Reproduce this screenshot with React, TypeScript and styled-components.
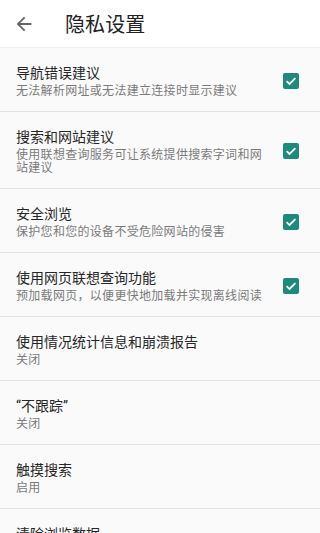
import React from "react";
import styled, { createGlobalStyle } from "styled-components";

const Global = createGlobalStyle`
  html, body { margin: 0; padding: 0; background: #fafafa; }
  body { font-family: Roboto, "Noto Sans CJK SC", sans-serif; overflow: hidden; }
  * { box-sizing: border-box; }
`;

const Page = styled.div`
  width: 320px;
  height: 533px;
  overflow: hidden;
  background: #fafafa;
  display: flex;
  flex-direction: column;
`;

const Header = styled.header`
  height: 48px;
  flex: none;
  background: #ffffff;
  border-bottom: 1px solid #f0f0f0;
  display: flex;
  align-items: center;
  padding-left: 13px;
`;

const BackButton = styled.div`
  width: 22px;
  height: 22px;
  display: flex;
  color: #666666;
  margin-right: 30px;
  margin-top: 1px;
`;

const Title = styled.h1`
  margin: 0;
  font-size: 20px;
  font-weight: 400;
  color: #222222;
  letter-spacing: 0.1px;
`;

const List = styled.div`
  display: flex;
  flex-direction: column;
`;

const Row = styled.div`
  display: flex;
  align-items: center;
  gap: 14px;
  padding: 15px 21px 13px 16px;
  border-bottom: 1px solid #e2e2e2;
  flex: none;
`;

const Texts = styled.div`
  flex: 1;
  min-width: 0;
  display: flex;
  flex-direction: column;
`;

const ItemTitle = styled.div`
  font-size: 14px;
  line-height: 20px;
  color: #262626;
`;

const ItemSub = styled.div`
  margin-top: 2px;
  font-size: 12px;
  line-height: 13px;
  letter-spacing: 0.3px;
  color: #7a7a7a;
`;

const Check = styled.div`
  width: 16px;
  height: 16px;
  flex: none;
  border-radius: 2px;
  background: #1e8a7c;
  display: flex;
  align-items: center;
  justify-content: center;
`;

const ArrowBack = () => (
  <svg viewBox="0 0 24 24" width="22" height="22" fill="currentColor">
    <path d="M20 11H7.83l5.59-5.59L12 4l-8 8 8 8 1.41-1.41L7.83 13H20v-2z" />
  </svg>
);

const CheckMark = () => (
  <svg viewBox="0 0 16 16" width="16" height="16">
    <path d="M3.6 8.2l2.9 2.8 5.9-5.9" fill="none" stroke="#ffffff" strokeWidth="1.8" />
  </svg>
);

type Item = { title: string; sub: string; checked?: boolean };

const items: Item[] = [
  { title: "导航错误建议", sub: "无法解析网址或无法建立连接时显示建议", checked: true },
  { title: "搜索和网站建议", sub: "使用联想查询服务可让系统提供搜索字词和网站建议", checked: true },
  { title: "安全浏览", sub: "保护您和您的设备不受危险网站的侵害", checked: true },
  { title: "使用网页联想查询功能", sub: "预加载网页，以便更快地加载并实现离线阅读", checked: true },
  { title: "使用情况统计信息和崩溃报告", sub: "关闭" },
  { title: "“不跟踪”", sub: "关闭" },
  { title: "触摸搜索", sub: "启用" },
  { title: "清除浏览数据", sub: "" },
];

export default function App() {
  return (
    <>
      <Global />
      <Page>
        <Header>
          <BackButton>
            <ArrowBack />
          </BackButton>
          <Title>隐私设置</Title>
        </Header>
        <List>
          {items.map((it) => (
            <Row key={it.title}>
              <Texts>
                <ItemTitle>{it.title}</ItemTitle>
                {it.sub && <ItemSub>{it.sub}</ItemSub>}
              </Texts>
              {it.checked && (
                <Check>
                  <CheckMark />
                </Check>
              )}
            </Row>
          ))}
        </List>
      </Page>
    </>
  );
}
